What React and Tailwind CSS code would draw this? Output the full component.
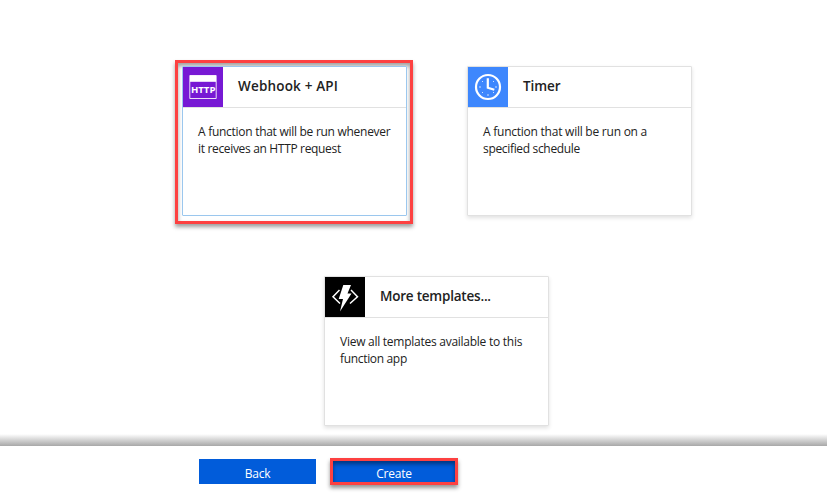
function HttpIcon() {
  return (
    <svg width="40" height="40" viewBox="0 0 40 40" className="block">
      <rect width="40" height="40" fill="#7719d4" />
      <path d="M6.800 8.500h26.400v23H6.800z" fill="none" stroke="#fff" strokeOpacity="0.85" />
      <path d="M7 8.500h26v6.300H7z" fill="#fff" />
      <text x="20.200" y="26" textAnchor="middle" textLength="24.500" lengthAdjust="spacingAndGlyphs" fill="#fff" fontSize="9.300" fontWeight="700" fontFamily="Open Sans, sans-serif">HTTP</text>
    </svg>
  );
}

function ClockIcon() {
  return (
    <svg width="40" height="40" viewBox="0 0 40 40" className="block">
      <rect width="40" height="40" fill="#3e87fd" />
      <circle cx="20" cy="20" r="12" fill="none" stroke="#fff" strokeWidth="2.200" />
      <path d="M19.800 11.300v9.500l6.500 2" fill="none" stroke="#fff" strokeWidth="2.200" />
      <g fill="#fff" opacity="0.75">
        <rect x="14" y="14" width="1" height="1" />
        <rect x="25" y="14" width="1" height="1" />
        <rect x="14" y="25" width="1" height="1" />
        <rect x="25" y="25" width="1" height="1" />
        <rect x="11" y="19" width="2" height="2" opacity="0.5" />
        <rect x="27" y="19" width="2" height="2" opacity="0.5" />
        <rect x="19" y="27" width="2" height="2" opacity="0.5" />
      </g>
    </svg>
  );
}

function BoltIcon() {
  return (
    <svg width="40" height="40" viewBox="0 0 40 40" className="block">
      <rect width="40" height="40" fill="#000" />
      <path d="M14.500 13l-6.500 6.700 7 6.800M26 13l6.500 6.700-7.500 6.800" fill="none" stroke="#fff" strokeWidth="1.500" />
      <path d="M18.300 8H26l-3.500 8.500h4L15 34.500l3-12.500h-4.300z" fill="#fff" />
    </svg>
  );
}

function Card({ icon, title, titleClass, lines, selected }) {
  return (
    <section
      className={
        "h-[150px] w-[225px] rounded-[1px] border bg-white " +
        (selected ? "border-[#9bc7ee]" : "border-[#e1e1e1] shadow-[0_2px_4px_rgba(0,0,0,0.12)]")
      }
    >
      <header className="flex h-[41px] border-b border-[#e1e1e1]">
        {icon}
        <h2 className={"pl-[15px] text-[13.500px] leading-[39px] font-semibold whitespace-nowrap text-[#222] " + titleClass}>{title}</h2>
      </header>
      <div className="pt-[15px] pl-[15px] text-[12px] leading-[17px] whitespace-nowrap text-[#222]">
        {lines.map((line) => (
          <p key={line.text} className={line.tracking}>{line.text}</p>
        ))}
      </div>
    </section>
  );
}

export default function App() {
  return (
    <div className="flex h-[496px] w-[827px] flex-col overflow-hidden bg-white font-['Open_Sans','Noto_Sans',sans-serif]">
      <main className="flex h-[434px] shrink-0 flex-col">
        <div className="flex pt-[60px] pl-[175px]">
          <div className="h-[164px] w-[238px] border-[3px] border-[#fd4141] pt-[3px] pl-[4px] shadow-[0_3px_4px_rgba(0,0,0,0.38),inset_0_3px_4px_rgba(0,0,0,0.38)]">
            <Card selected icon={<HttpIcon />} title="Webhook + API" titleClass="tracking-[0.180px]" lines={[
              { text: "A function that will be run whenever", tracking: "tracking-[-0.280px]" },
              { text: "it receives an HTTP request", tracking: "tracking-[-0.330px]" },
            ]} />
          </div>
          <div className="pt-[6px] pl-[54px]">
            <Card icon={<ClockIcon />} title="Timer" titleClass="tracking-[-0.100px]" lines={[
              { text: "A function that will be run on a", tracking: "tracking-[-0.240px]" },
              { text: "specified schedule", tracking: "tracking-[-0.330px]" },
            ]} />
          </div>
        </div>
        <div className="pt-[52px] pl-[324px]">
          <Card icon={<BoltIcon />} title="More templates..." titleClass="tracking-[-0.220px]" lines={[
            { text: "View all templates available to this", tracking: "tracking-[-0.260px]" },
            { text: "function app", tracking: "tracking-[-0.330px]" },
          ]} />
        </div>
      </main>
      <div className="h-[12px] shrink-0 bg-linear-to-b from-white to-[#a8a8a8]" />
      <footer className="flex h-[50px] shrink-0 items-start pt-[12px] pl-[199px] text-[12px] tracking-[-0.250px] text-white">
        <button className="mt-px h-[25px] w-[117px] bg-[#015cda] pt-[4px] leading-[21px]">Back</button>
        <button className="ml-[14px] h-[27px] w-[128px] border-[3px] border-[#fd4141] bg-[#015cda] pt-[4px] leading-[17px] shadow-[0_3px_4px_rgba(0,0,0,0.42),inset_0_3px_4px_rgba(0,0,0,0.42)]">Create</button>
      </footer>
    </div>
  );
}
